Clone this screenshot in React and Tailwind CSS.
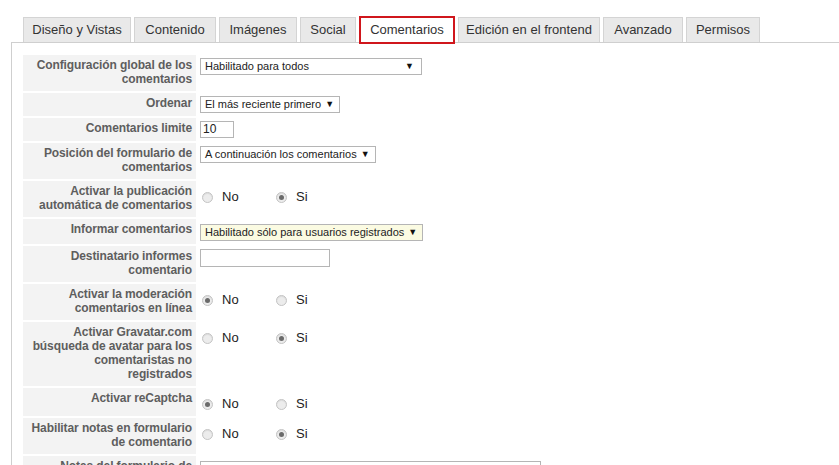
import React from 'react';

const tabs = [
  { label: 'Diseño y Vistas', w: 'w-[108px]' },
  { label: 'Contenido', w: 'w-[82px]' },
  { label: 'Imágenes', w: 'w-[78px]' },
  { label: 'Social', w: 'w-[56px]' },
  { label: 'Comentarios', w: 'w-[96px]', active: true },
  { label: 'Edición en el frontend', w: 'w-[142px]' },
  { label: 'Avanzado', w: 'w-[80px]' },
  { label: 'Permisos', w: 'w-[74px]' },
];

function Select({ value, w, yellow }) {
  return (
    <div
      className={`flex items-center justify-between gap-[4px] h-[17px] border border-[#b5b5b5] pl-[4px] pr-[7px] text-[11px] text-[#222] whitespace-nowrap ${w} ${
        yellow ? 'bg-[#fbfbe2]' : 'bg-white'
      }`}
    >
      <span>{value}</span>
      <span className="text-[9px] text-[#111]">▼</span>
    </div>
  );
}

function Radio({ checked }) {
  return (
    <span className="flex items-center justify-center w-[11px] h-[11px] rounded-full border border-[#c4c4c4] bg-[#ececec] shadow-[inset_0_1px_1px_rgba(0,0,0,0.08)]">
      {checked && <span className="w-[5px] h-[5px] rounded-full bg-[#6a6a6a]" />}
    </span>
  );
}

function YesNo({ yes }) {
  return (
    <div className="flex items-center h-[22px] pl-[2px] text-[13px] text-[#222]">
      <div className="flex items-center gap-[9px] w-[74px]">
        <Radio checked={!yes} />
        <span>No</span>
      </div>
      <div className="flex items-center gap-[9px]">
        <Radio checked={yes} />
        <span>Si</span>
      </div>
    </div>
  );
}

function Row({ label, children, radio }) {
  return (
    <div className="flex border-b-2 border-white">
      <div className="w-[173px] shrink-0 bg-[#f3f3f3] pt-[3px] pb-[5px] pr-[4px] pl-[4px] text-right text-[12px] leading-[14px] font-bold tracking-[-0.1px] text-[#5e5e5e]">
        {label}
      </div>
      <div className={`flex-1 pl-[4px] ${radio ? 'pt-[5px] pb-[1px]' : 'pt-[3px] pb-[3px]'}`}>{children}</div>
    </div>
  );
}

export default function App() {
  return (
    <div className="h-[465px] overflow-hidden bg-white font-['Liberation_Sans',Arial,sans-serif]">
      <div className="flex items-end gap-[3px] pl-[23px] pt-[16px]">
        {tabs.map((t) =>
          t.active ? (
            <div
              key={t.label}
              className={`${t.w} h-[28px] -mb-[2px] relative z-10 flex items-center justify-center border-2 border-[#d0161c] bg-white text-[13px] text-[#333]`}
            >
              {t.label}
            </div>
          ) : (
            <div
              key={t.label}
              className={`${t.w} h-[25px] flex items-center justify-center border border-b-0 border-[#d4d4d4] bg-[#e9e9e9] text-[13px] text-[#333]`}
            >
              {t.label}
            </div>
          )
        )}
      </div>
      <div className="ml-[11px] border-t border-l border-[#cfcfcf] pl-[11px] pt-[12px] pr-[20px] h-[500px]">
        <div className="w-[620px]">
          <Row label="Configuración global de los comentarios">
            <Select value="Habilitado para todos" w="w-[222px]" />
          </Row>
          <Row label="Ordenar">
            <Select value="El más reciente primero" w="w-[140px]" />
          </Row>
          <Row label="Comentarios limite">
            <div className="w-[34px] h-[17px] border border-[#b5b5b5] bg-white pl-[2px] text-[12px] leading-[15px] text-[#222]">10</div>
          </Row>
          <Row label="Posición del formulario de comentarios">
            <Select value="A continuación los comentarios" w="w-[176px]" />
          </Row>
          <Row label="Activar la publicación automática de comentarios" radio>
            <YesNo yes />
          </Row>
          <Row label="Informar comentarios">
            <div className="pt-[2px]">
              <Select value="Habilitado sólo para usuarios registrados" w="w-[223px]" yellow />
            </div>
          </Row>
          <Row label="Destinatario informes comentario">
            <div className="w-[130px] h-[18px] border border-[#b5b5b5] bg-white" />
          </Row>
          <Row label="Activar la moderación comentarios en línea" radio>
            <YesNo />
          </Row>
          <Row label="Activar Gravatar.com búsqueda de avatar para los comentaristas no registrados" radio>
            <YesNo yes />
          </Row>
          <Row label="Activar reCaptcha" radio>
            <YesNo />
          </Row>
          <Row label="Habilitar notas en formulario de comentario" radio>
            <YesNo yes />
          </Row>
          <Row label="Notas del formulario de comentario">
            <div className="mt-[2px] w-[341px] h-[60px] border border-[#b5b5b5] bg-white" />
          </Row>
        </div>
      </div>
    </div>
  );
}
